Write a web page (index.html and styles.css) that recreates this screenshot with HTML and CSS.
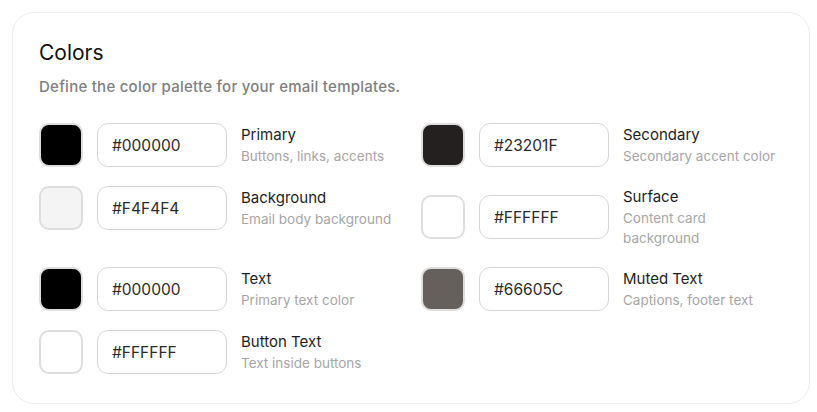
FILE: index.html
```html
<!DOCTYPE html>
<html>
<head>
<meta charset="utf-8">
<link rel="stylesheet" href="styles.css">
</head>
<body>
<section class="card">
  <h2 class="title">Colors</h2>
  <p class="subtitle">Define the color palette for your email templates.</p>
  <div class="grid">
    <div class="item">
      <div class="swatch" style="background:#000000"></div>
      <div class="input">#000000</div>
      <div class="label"><div class="name">Primary</div><div class="desc">Buttons, links, accents</div></div>
    </div>
    <div class="item">
      <div class="swatch" style="background:#23201F"></div>
      <div class="input">#23201F</div>
      <div class="label"><div class="name">Secondary</div><div class="desc">Secondary accent color</div></div>
    </div>
    <div class="item">
      <div class="swatch" style="background:#F4F4F4"></div>
      <div class="input">#F4F4F4</div>
      <div class="label"><div class="name">Background</div><div class="desc">Email body background</div></div>
    </div>
    <div class="item">
      <div class="swatch" style="background:#FFFFFF"></div>
      <div class="input">#FFFFFF</div>
      <div class="label"><div class="name">Surface</div><div class="desc">Content card background</div></div>
    </div>
    <div class="item">
      <div class="swatch" style="background:#000000"></div>
      <div class="input">#000000</div>
      <div class="label"><div class="name">Text</div><div class="desc">Primary text color</div></div>
    </div>
    <div class="item">
      <div class="swatch" style="background:#66605C"></div>
      <div class="input">#66605C</div>
      <div class="label"><div class="name">Muted Text</div><div class="desc">Captions, footer text</div></div>
    </div>
    <div class="item">
      <div class="swatch" style="background:#FFFFFF"></div>
      <div class="input">#FFFFFF</div>
      <div class="label"><div class="name">Button Text</div><div class="desc">Text inside buttons</div></div>
    </div>
  </div>
</section>
</body>
</html>
```

FILE: styles.css
```css
html, body {
  margin: 0;
  background: #ffffff;
}
body {
  font-family: Inter, "Noto Sans", sans-serif;
  color: #1a1a1a;
}
.card {
  box-sizing: border-box;
  margin: 12px 7px 8px 12px;
  width: 798px;
  height: 392px;
  border: 1px solid #ececec;
  border-radius: 22px;
  background: #ffffff;
  padding: 25px 26px 0 26px;
}
.title {
  margin: 0;
  font-size: 21px;
  line-height: 30px;
  font-weight: 400;
  color: #111;
}
.subtitle {
  margin: 9px 0 0 0;
  font-size: 15px;
  letter-spacing: 0.25px;
  line-height: 20px;
  color: #808080;
  font-weight: 500;
}
.grid {
  margin-top: 26px;
  display: grid;
  grid-template-columns: 1fr 1fr;
  column-gap: 20px;
  row-gap: 19px;
  align-items: start;
}
.item {
  display: flex;
  align-items: center;
  gap: 14px;
}
.swatch {
  box-sizing: border-box;
  flex: none;
  width: 44px;
  height: 44px;
  border-radius: 10px;
  border: 2px solid #dedede;
}
.input {
  box-sizing: border-box;
  flex: none;
  width: 130px;
  height: 44px;
  border: 1px solid #d6d6d6;
  border-radius: 11px;
  padding: 0 14px;
  display: flex;
  align-items: center;
  font-size: 15.5px;
  color: #2a2a2a;
}
.label {
  flex: 1;
  min-width: 0;
  max-width: 160px;
}
.name {
  font-size: 15px;
  line-height: 22px;
  font-weight: 400;
  color: #1e1e1e;
}
.desc {
  font-size: 13.5px;
  line-height: 20px;
  color: #a6a6a6;
}
```
